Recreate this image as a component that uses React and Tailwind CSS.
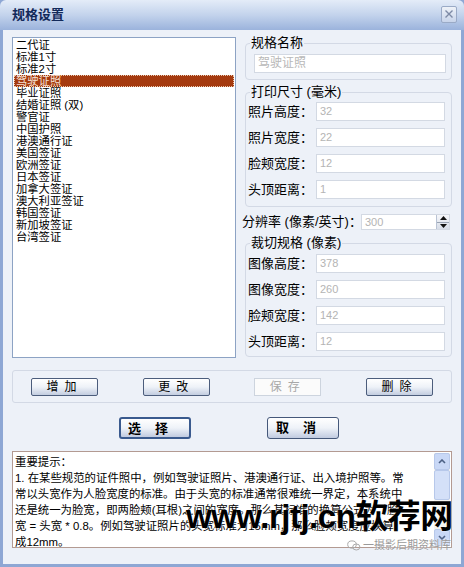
const items = [
    '二代证', '标准1寸', '标准2寸', '驾驶证照', '毕业证照', '结婚证照 (双)', '警官证', '中国护照',
    '港澳通行证', '美国签证', '欧洲签证', '日本签证', '加拿大签证', '澳大利亚签证', '韩国签证', '新加坡签证', '台湾签证',
]

const notes = [
    '重要提示：',
    '1.  在某些规范的证件照中，例如驾驶证照片、港澳通行证、出入境护照等。常',
    '常以头宽作为人脸宽度的标准。由于头宽的标准通常很难统一界定，本系统中',
    '还是统一为脸宽，即两脸颊(耳根)之间的宽度。那么其标准的换算公式为：脸',
    '宽 = 头宽 * 0.8。例如驾驶证照片的头宽标准为15mm，那么脸颊宽度应换算',
    '成12mm。',
]

function Field({ label, value }) {
    return (
        <div className="flex items-center h-[19px]">
            <span className="w-[68px] text-[13px] leading-[19px] text-black">{label}</span>
            <div className="w-[129px] h-[19px] border border-[#d3d9e3] bg-white pl-[3px] text-[11px] leading-[17px] text-[#b4b4b4]">
                {value}
            </div>
        </div>
    )
}

function Group({ title, children, className }) {
    return (
        <fieldset className={`border border-[#d3d9e5] rounded-[4px] pl-[2px] pr-[5px] ${className}`}>
            <legend className="ml-[2px] px-[1px] text-[13px] leading-[16px] text-black">{title}</legend>
            {children}
        </fieldset>
    )
}

function Btn({ children, disabled }) {
    if (disabled) {
        return (
            <div className="w-[67px] h-[18px] border border-[#cdd4de] bg-[#fbfbfb] text-center text-[12px] leading-[16px] text-[#a8a8a8] tracking-[6px]">
                {children}
            </div>
        )
    }
    return (
        <div className="w-[67px] h-[18px] border border-[#4c5d7c] rounded-[2px] bg-linear-to-b from-white via-[#eef2f8] to-[#c3cde0] text-center text-[12px] leading-[16px] text-black tracking-[6px]">
            {children}
        </div>
    )
}

function BigBtn({ children, strong }) {
    return (
        <div className={`w-[72px] h-[22px] rounded-[3px] bg-linear-to-b from-white via-[#eef2f8] to-[#c1cbe0] text-center text-[13px] leading-[19px] font-bold text-black tracking-[14px] ${strong ? 'border-2 border-[#3a5a8e]' : 'border border-[#45587a]'}`}>
            {children}
        </div>
    )
}

export default function App() {
    return (
        <div className="w-[464px] h-[567px] flex flex-col overflow-hidden bg-[#8ea7d4] font-['Liberation_Sans','Noto_Sans_CJK_SC',sans-serif]">
            {/* Title bar */}
            <div className="h-[30px] shrink-0 flex items-center justify-between pl-[12px] pr-[7px] rounded-t-[6px] bg-linear-to-b from-[#e4ecf8] via-[#c3d3ec] to-[#9bb3dc]">
                <span className="text-[13px] font-bold text-[#12295a]">规格设置</span>
                <div className="w-[16px] h-[17px] mb-[2px] border border-[#9aaac6] rounded-[2px] bg-linear-to-b from-[#eef2f8] to-[#c8d4ea] flex items-center justify-center">
                    <svg width="10" height="10" viewBox="0 0 10 10">
                        <path d="M1.5 1.5 L8.5 8.5 M8.5 1.5 L1.5 8.5" stroke="#7d8aa6" strokeWidth="1.4" />
                    </svg>
                </div>
            </div>

            {/* Body */}
            <div className="relative flex-1 mx-[3px] mb-[3px] bg-[#edf1f8] flex flex-col px-[9px] pt-[5px]">
                <div className="flex gap-[6px]">
                    {/* List */}
                    <div className="mt-[2px] w-[224px] h-[321px] shrink-0 border border-[#8da3c4] bg-white pt-[1px] px-[1px] text-[11.3px] leading-[12px]">
                        {items.map((it, i) => (
                            <div
                                key={it}
                                className={`h-[12px] pl-[2px] whitespace-nowrap ${i === 3 ? 'bg-[#a53a0f] text-[#f6e2d6] outline-1 outline-dotted outline-[#e8c8b0] -outline-offset-1' : 'text-black'}`}
                            >
                                {it}
                            </div>
                        ))}
                    </div>

                    {/* Right side */}
                    <div className="flex-1 flex flex-col">
                        <Group title="规格名称" className="ml-[3px] pb-[6px]">
                            <div className="mt-[3px] ml-[6px] w-[192px] h-[19px] border border-[#d3d9e3] bg-white pl-[3px] text-[12px] leading-[17px] text-[#b8b8b8]">
                                驾驶证照
                            </div>
                        </Group>

                        <Group title="打印尺寸 (毫米)" className="ml-[3px] mt-[4px] pb-[7px]">
                            <div className="flex flex-col gap-[7px] pt-[2px]">
                                <Field label="照片高度：" value="32" />
                                <Field label="照片宽度：" value="22" />
                                <Field label="脸颊宽度：" value="12" />
                                <Field label="头顶距离：" value="1" />
                            </div>
                        </Group>

                        <div className="mt-[7px] h-[16px] flex items-center">
                            <span className="w-[119px] text-[13px] leading-[16px] whitespace-nowrap text-black">分辨率 (像素/英寸)：</span>
                            <div className="w-[89px] h-[16px] flex border border-[#d3d9e3] bg-white">
                                <span className="flex-1 pl-[3px] text-[11px] leading-[14px] text-[#b4b4b4]">300</span>
                                <div className="w-[13px] h-full flex flex-col border-l border-[#b9c3d4] bg-linear-to-b from-[#f6f7fa] to-[#d7dde8]">
                                    <div className="flex-1 flex items-center justify-center border-b border-[#9aa4b4]">
                                        <svg width="7" height="4" viewBox="0 0 7 4"><path d="M0 4 L3.5 0 L7 4 Z" fill="#111" /></svg>
                                    </div>
                                    <div className="flex-1 flex items-center justify-center">
                                        <svg width="7" height="4" viewBox="0 0 7 4"><path d="M0 0 L3.5 4 L7 0 Z" fill="#111" /></svg>
                                    </div>
                                </div>
                            </div>
                        </div>

                        <Group title="裁切规格 (像素)" className="ml-[3px] mt-[5px] pb-[5px]">
                            <div className="flex flex-col gap-[7px] pt-[3px]">
                                <Field label="图像高度：" value="378" />
                                <Field label="图像宽度：" value="260" />
                                <Field label="脸颊宽度：" value="142" />
                                <Field label="头顶距离：" value="12" />
                            </div>
                        </Group>
                    </div>
                </div>

                {/* Edit buttons */}
                <div className="mt-[12px] h-[33px] border border-[#d3d9e5] rounded-[3px] flex items-center justify-between px-[18px]">
                    <Btn>增加</Btn>
                    <Btn>更改</Btn>
                    <Btn disabled>保存</Btn>
                    <Btn>删除</Btn>
                </div>

                {/* Main buttons */}
                <div className="mt-[14px] flex gap-[76px] pl-[107px]">
                    <BigBtn strong>选择</BigBtn>
                    <BigBtn>取消</BigBtn>
                </div>

                {/* Notes */}
                <div className="mt-[12px] h-[97px] flex border border-[#b39a92] bg-white">
                    <div className="flex-1 pl-[2px] pt-[2px] text-[11.4px] leading-[16px] text-black">
                        {notes.map((l) => (
                            <div key={l} className="whitespace-nowrap h-[16px]">{l}</div>
                        ))}
                    </div>
                    <div className="w-[16px] my-[1px] mr-[1px] flex flex-col bg-[#f5f4ef]">
                        <div className="h-[17px] rounded-[2px] border border-[#b7c8ea] bg-[#c9d8f6] flex items-center justify-center">
                            <svg width="8" height="5" viewBox="0 0 8 5"><path d="M1 4 L4 1 L7 4" fill="none" stroke="#4d6185" strokeWidth="1.6" /></svg>
                        </div>
                        <div className="h-[30px] rounded-[2px] border border-[#b7c8ea] bg-[#d4e0f8]" />
                        <div className="flex-1" />
                        <div className="h-[17px] rounded-[2px] border border-[#b7c8ea] bg-[#c9d8f6] flex items-center justify-center">
                            <svg width="8" height="5" viewBox="0 0 8 5"><path d="M1 1 L4 4 L7 1" fill="none" stroke="#4d6185" strokeWidth="1.6" /></svg>
                        </div>
                    </div>
                </div>

                {/* Watermarks */}
                <div className="absolute left-[183px] top-[470px] text-[33px] leading-[34px] font-bold text-black whitespace-nowrap tracking-[-0.5px] [text-shadow:0_0_2px_#fff]">
                    www.rjtj.cn软荐网
                </div>
                <div className="absolute left-[344px] top-[509px] flex items-center gap-[2px] text-[11px] leading-[12px] text-[#9a9a9a] whitespace-nowrap [text-shadow:0_0_2px_#fff]">
                    <svg width="14" height="11" viewBox="0 0 14 11">
                        <ellipse cx="5" cy="4.5" rx="4.3" ry="3.6" fill="none" stroke="#aaa" strokeWidth="1" />
                        <ellipse cx="9.3" cy="7" rx="3.6" ry="3" fill="none" stroke="#aaa" strokeWidth="1" />
                    </svg>
                    一摄影后期资料库
                </div>
            </div>
        </div>
    )
}
